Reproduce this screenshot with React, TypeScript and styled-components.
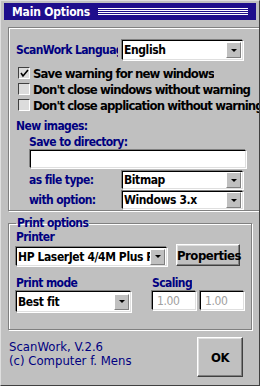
import { createGlobalStyle, styled } from 'styled-components'

const GlobalStyle = createGlobalStyle`
  body {
    margin: 0;
    font-family: "DejaVu Sans Condensed", "Liberation Sans", sans-serif;
    font-size: 12px;
    font-weight: bold;
    letter-spacing: -0.4px;
  }
`

const Window = styled.div`
  width: 260px;
  height: 386px;
  box-sizing: border-box;
  background: #c0c0c0;
  border: 1px solid;
  border-color: #dfdfdf #404040 #404040 #dfdfdf;
  display: flex;
  flex-direction: column;
  overflow: hidden;
`

const TitleBar = styled.div`
  margin: 2px 3px 0 3px;
  height: 17px;
  background: #1e0e8c;
  display: flex;
  align-items: center;
`

const TitleText = styled.span`
  color: #fff;
  font-size: 12px;
  letter-spacing: -0.2px;
  padding: 0 6px 0 8px;
  white-space: nowrap;
`

const Stripes = styled.div`
  flex: 1;
  height: 8px;
  margin: 0 8px 0 2px;
  background: repeating-linear-gradient(to bottom, #fff 0 1px, #1e0e8c 1px 2px);
`

const GroupBox = styled.fieldset<{ $top: number; $height: number }>`
  margin: ${p => p.$top}px 7px 0 7px;
  height: ${p => p.$height}px;
  box-sizing: border-box;
  padding: 0 7px;
  border: 1px solid #808080;
  box-shadow: inset 1px 1px 0 #fff, 1px 1px 0 #fff;
  display: flex;
  flex-direction: column;
`

const Legend = styled.legend`
  color: #000080;
  padding: 0 1px;
  line-height: 12px;
  letter-spacing: -0.6px;
`

const Label = styled.div<{ $indent?: number; $width?: number; $mt?: number; $lh?: number; $mr?: number }>`
  color: #000080;
  padding-left: ${p => p.$indent ?? 0}px;
  width: ${p => (p.$width ? `${p.$width}px` : 'auto')};
  margin-top: ${p => p.$mt ?? 0}px;
  margin-right: ${p => p.$mr ?? 0}px;
  line-height: ${p => p.$lh ?? 16}px;
  letter-spacing: -0.6px;
  box-sizing: border-box;
  flex: none;
  white-space: nowrap;
  overflow: hidden;
`

const Row = styled.div<{ $mt?: number; $align?: string }>`
  display: flex;
  align-items: ${p => p.$align ?? 'center'};
  margin-top: ${p => p.$mt ?? 0}px;
`

const Sunken = styled.div<{ $width: number; $height?: number; $ml?: number }>`
  width: ${p => p.$width}px;
  height: ${p => p.$height ?? 20}px;
  margin-left: ${p => p.$ml ?? 0}px;
  box-sizing: border-box;
  background: #fff;
  border: 1px solid;
  border-color: #000 #dfdfdf #dfdfdf #000;
  box-shadow: -1px -1px 0 #808080, 1px 1px 0 #fff;
  display: flex;
  align-items: center;
  color: #000;
  overflow: hidden;
  white-space: nowrap;
  flex: none;
`

const SelectText = styled.span`
  flex: 1;
  padding-left: 1px;
  overflow: hidden;
  font-size: 12px;
`

const ArrowButton = styled.div`
  width: 15px;
  height: 16px;
  margin-right: 1px;
  box-sizing: border-box;
  background: #c0c0c0;
  border: 1px solid;
  border-color: #fff #808080 #808080 #fff;
  display: flex;
  align-items: center;
  justify-content: center;
  flex: none;
  &::after {
    content: '';
    border-left: 3px solid transparent;
    border-right: 3px solid transparent;
    border-top: 3px solid #000;
  }
`

const CheckRow = styled.label`
  display: flex;
  align-items: center;
  height: 16px;
  color: #000;
  white-space: nowrap;
  overflow: hidden;
  margin: 0 1px 0 2px;
  font-size: 13px;
  letter-spacing: -0.85px;
`

const CheckBox = styled.span`
  width: 12px;
  height: 12px;
  box-sizing: border-box;
  flex: none;
  margin-right: 3px;
  background: #dcdcdc;
  border: 1px solid;
  border-color: #404040 #fff #fff #404040;
  display: flex;
  align-items: center;
  justify-content: center;
`

const GrayValue = styled.span`
  color: #a0a0a0;
  font-weight: normal;
  padding-left: 4px;
  font-size: 12px;
  text-shadow: 1px 1px 0 #fff;
`

const Button = styled.button<{ $width: number; $height: number; $ml?: number }>`
  width: ${p => p.$width}px;
  height: ${p => p.$height}px;
  margin-left: ${p => p.$ml ?? 0}px;
  background: #c0c0c0;
  border: 1px solid;
  border-color: #fff #404040 #404040 #fff;
  box-shadow: inset -1px -1px 0 #808080, inset 1px 1px 0 #dfdfdf;
  font: inherit;
  font-size: 13px;
  letter-spacing: -0.5px;
  color: #000;
  padding: 0;
  flex: none;
`

const Footer = styled.div`
  display: flex;
  justify-content: space-between;
  align-items: center;
  padding: 7px 16px 0 8px;
`

const Credits = styled.div`
  color: #000080;
  line-height: 14px;
  font-size: 13px;
  font-weight: normal;
  letter-spacing: 0;
  margin-top: -6px;
`

const Select = ({ width, value, height }: { width: number; value: string; height?: number }) => (
  <Sunken $width={width} $height={height}>
    <SelectText>{value}</SelectText>
    <ArrowButton />
  </Sunken>
)

const Check = ({ checked, text }: { checked?: boolean; text: string }) => (
  <CheckRow>
    <CheckBox>
      {checked && (
        <svg width="9" height="9" viewBox="0 0 9 9">
          <path d="M1 4 L3 7 L8 1" stroke="#000" strokeWidth="1.6" fill="none" />
        </svg>
      )}
    </CheckBox>
    {text}
  </CheckRow>
)

export default function App() {
  return (
    <>
      <GlobalStyle />
      <Window>
        <TitleBar>
          <TitleText>Main Options</TitleText>
          <Stripes />
        </TitleBar>

        <GroupBox $top={7} $height={184}>
          <Row $mt={12}>
            <Label $width={102} $mr={4}>ScanWork Language</Label>
            <Select width={121} value="English" />
          </Row>
          <Row $mt={5}>
            <Check checked text="Save warning for new windows" />
          </Row>
          <Check text="Don't close windows without warning" />
          <Check text="Don't close application without warning" />
          <Label $mt={5}>New images:</Label>
          <Label $indent={13}>Save to directory:</Label>
          <Row>
            <Sunken $width={216} $height={18} $ml={14} />
          </Row>
          <Row $mt={3}>
            <Label $indent={13} $width={106}>as file type:</Label>
            <Select width={121} height={18} value="Bitmap" />
          </Row>
          <Row $mt={2}>
            <Label $indent={13} $width={106}>with option:</Label>
            <Select width={121} height={18} value="Windows 3.x" />
          </Row>
        </GroupBox>

        <GroupBox $top={6} $height={113}>
          <Legend>Print options</Legend>
          <Label $mt={1} $lh={14}>Printer</Label>
          <Row $align="flex-end">
            <Select width={151} height={19} value="HP LaserJet 4/4M Plus PS" />
            <Button $width={64} $height={22} $ml={9}>Properties</Button>
          </Row>
          <Row $mt={9}>
            <Label $width={136}>Print mode</Label>
            <Label>Scaling</Label>
          </Row>
          <Row $align="flex-start">
            <Select width={115} height={21} value="Best fit" />
            <Sunken $width={44} $height={19} $ml={21}><GrayValue>1.00</GrayValue></Sunken>
            <Sunken $width={44} $height={19} $ml={4}><GrayValue>1.00</GrayValue></Sunken>
          </Row>
        </GroupBox>

        <Footer>
          <Credits>
            ScanWork, V.2.6
            <br />
            (c) Computer f. Mens
          </Credits>
          <Button $width={46} $height={40}>OK</Button>
        </Footer>
      </Window>
    </>
  )
}
